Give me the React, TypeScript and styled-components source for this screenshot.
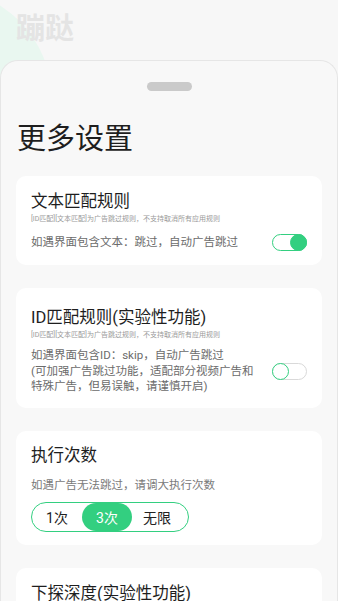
import React, { useState } from "react"
import styled, { createGlobalStyle } from "styled-components"

const GREEN = "#33cf80"

const GlobalStyle = createGlobalStyle`
  html, body {
    margin: 0;
    padding: 0;
    background: #f7f7f7;
    font-family: Roboto, "Noto Sans CJK SC", "Noto Sans", sans-serif;
  }
  * { box-sizing: border-box; }
`

const Page = styled.div`
  position: relative;
  width: 338px;
  height: 601px;
  overflow: hidden;
  background: #f7f7f7;
`

// mint blob behind the brand name
const Blob = styled.div`
  position: absolute;
  left: -172px;
  top: -12px;
  width: 224px;
  height: 224px;
  border-radius: 50%;
  background: #e9f7f0;
`

const Header = styled.header`
  position: relative;
  height: 60px;
  padding: 8px 0 0 16px;
`

const Brand = styled.div`
  font-size: 29px;
  line-height: 36px;
  font-weight: 700;
  color: #e4e4e4;
  font-family: "Noto Sans CJK SC", sans-serif;
`

const Sheet = styled.section`
  position: relative;
  background: #f8f8f8;
  border: 1px solid #e6e6e6;
  border-bottom: none;
  border-radius: 18px 18px 0 0;
  padding-bottom: 40px;
  min-height: 560px;
`

const Handle = styled.div`
  width: 45px;
  height: 9px;
  margin: 21px auto 0;
  border-radius: 5px;
  background: #cacaca;
`

const Heading = styled.h1`
  margin: 27px 0 22px 16px;
  font-size: 29px;
  line-height: 36px;
  font-weight: 400;
  color: #1e1e1e;
  font-family: "Noto Sans CJK SC", sans-serif;
`

const List = styled.div`
  display: flex;
  flex-direction: column;
  gap: 23px;
  padding: 0 15px;
`

const Card = styled.div<{ $top?: number }>`
  background: #fff;
  border-radius: 10px;
  padding: ${(p) => p.$top ?? 15}px 15px 13px;
`

const Title = styled.div`
  font-size: 16.5px;
  line-height: 22px;
  color: #1e1e1e;
`

const Tiny = styled.div`
  margin-top: 1px;
  font-size: 7px;
  line-height: 10px;
  color: #9a9a9a;
  white-space: nowrap;
`

const Row = styled.div`
  display: flex;
  align-items: center;
  justify-content: space-between;
  margin-top: 8px;
`

const Desc = styled.div<{ $lh?: number }>`
  font-size: 11.5px;
  line-height: ${(p) => p.$lh ?? 20}px;
  color: #6b6b6b;
`

const Hint = styled.div`
  margin-top: 10px;
  font-size: 11.5px;
  line-height: 16px;
  color: #7a7a7a;
`

const Track = styled.button<{ $on: boolean }>`
  position: relative;
  flex: none;
  width: 35px;
  height: 17px;
  padding: 0;
  border-radius: 9px;
  border: 1px solid ${(p) => (p.$on ? GREEN : "#d9d9d9")};
  background: #fff;
  cursor: pointer;
`

const Knob = styled.span<{ $on: boolean }>`
  position: absolute;
  top: -1px;
  ${(p) => (p.$on ? "right: -1px;" : "left: -1px;")}
  width: 17px;
  height: 17px;
  border-radius: 50%;
  background: ${(p) => (p.$on ? GREEN : "#fff")};
  border: 1px solid ${GREEN};
`

const Segments = styled.div`
  display: inline-flex;
  margin-top: 9px;
  padding: 0 6px 0 0;
  height: 30px;
  border: 1px solid ${GREEN};
  border-radius: 15px;
`

const Segment = styled.button<{ $active: boolean }>`
  width: 50px;
  height: 28px;
  border: none;
  border-radius: 14px;
  padding: 0;
  font-family: inherit;
  font-size: 14px;
  color: ${(p) => (p.$active ? "#fff" : "#222")};
  background: ${(p) => (p.$active ? GREEN : "transparent")};
  cursor: pointer;
`

const Toggle = ({ on, onClick }: { on: boolean; onClick: () => void }) => (
  <Track $on={on} onClick={onClick}>
    <Knob $on={on} />
  </Track>
)

const RULE_NOTE = "[ID匹配][文本匹配]为广告跳过规则，不支持取消所有应用规则"

export default function App() {
  const [textRule, setTextRule] = useState(true)
  const [idRule, setIdRule] = useState(false)
  const [times, setTimes] = useState("3次")

  return (
    <Page>
      <GlobalStyle />
      <Blob />
      <Header>
        <Brand>蹦跶</Brand>
      </Header>
      <Sheet>
        <Handle />
        <Heading>更多设置</Heading>
        <List>
          <Card>
            <Title>文本匹配规则</Title>
            <Tiny>{RULE_NOTE}</Tiny>
            <Row>
              <Desc>如遇界面包含文本：跳过，自动广告跳过</Desc>
              <Toggle on={textRule} onClick={() => setTextRule(!textRule)} />
            </Row>
          </Card>

          <Card $top={19}>
            <Title>ID匹配规则(实验性功能)</Title>
            <Tiny>{RULE_NOTE}</Tiny>
            <Row>
              <Desc $lh={15.5}>
                如遇界面包含ID：skip，自动广告跳过
                <br />
                (可加强广告跳过功能，适配部分视频广告和
                <br />
                特殊广告，但易误触，请谨慎开启)
              </Desc>
              <Toggle on={idRule} onClick={() => setIdRule(!idRule)} />
            </Row>
          </Card>

          <Card $top={14}>
            <Title>执行次数</Title>
            <Hint>如遇广告无法跳过，请调大执行次数</Hint>
            <Segments>
              {["1次", "3次", "无限"].map((t) => (
                <Segment key={t} $active={times === t} onClick={() => setTimes(t)}>
                  {t}
                </Segment>
              ))}
            </Segments>
          </Card>

          <Card>
            <Title>下探深度(实验性功能)</Title>
          </Card>
        </List>
      </Sheet>
    </Page>
  )
}
